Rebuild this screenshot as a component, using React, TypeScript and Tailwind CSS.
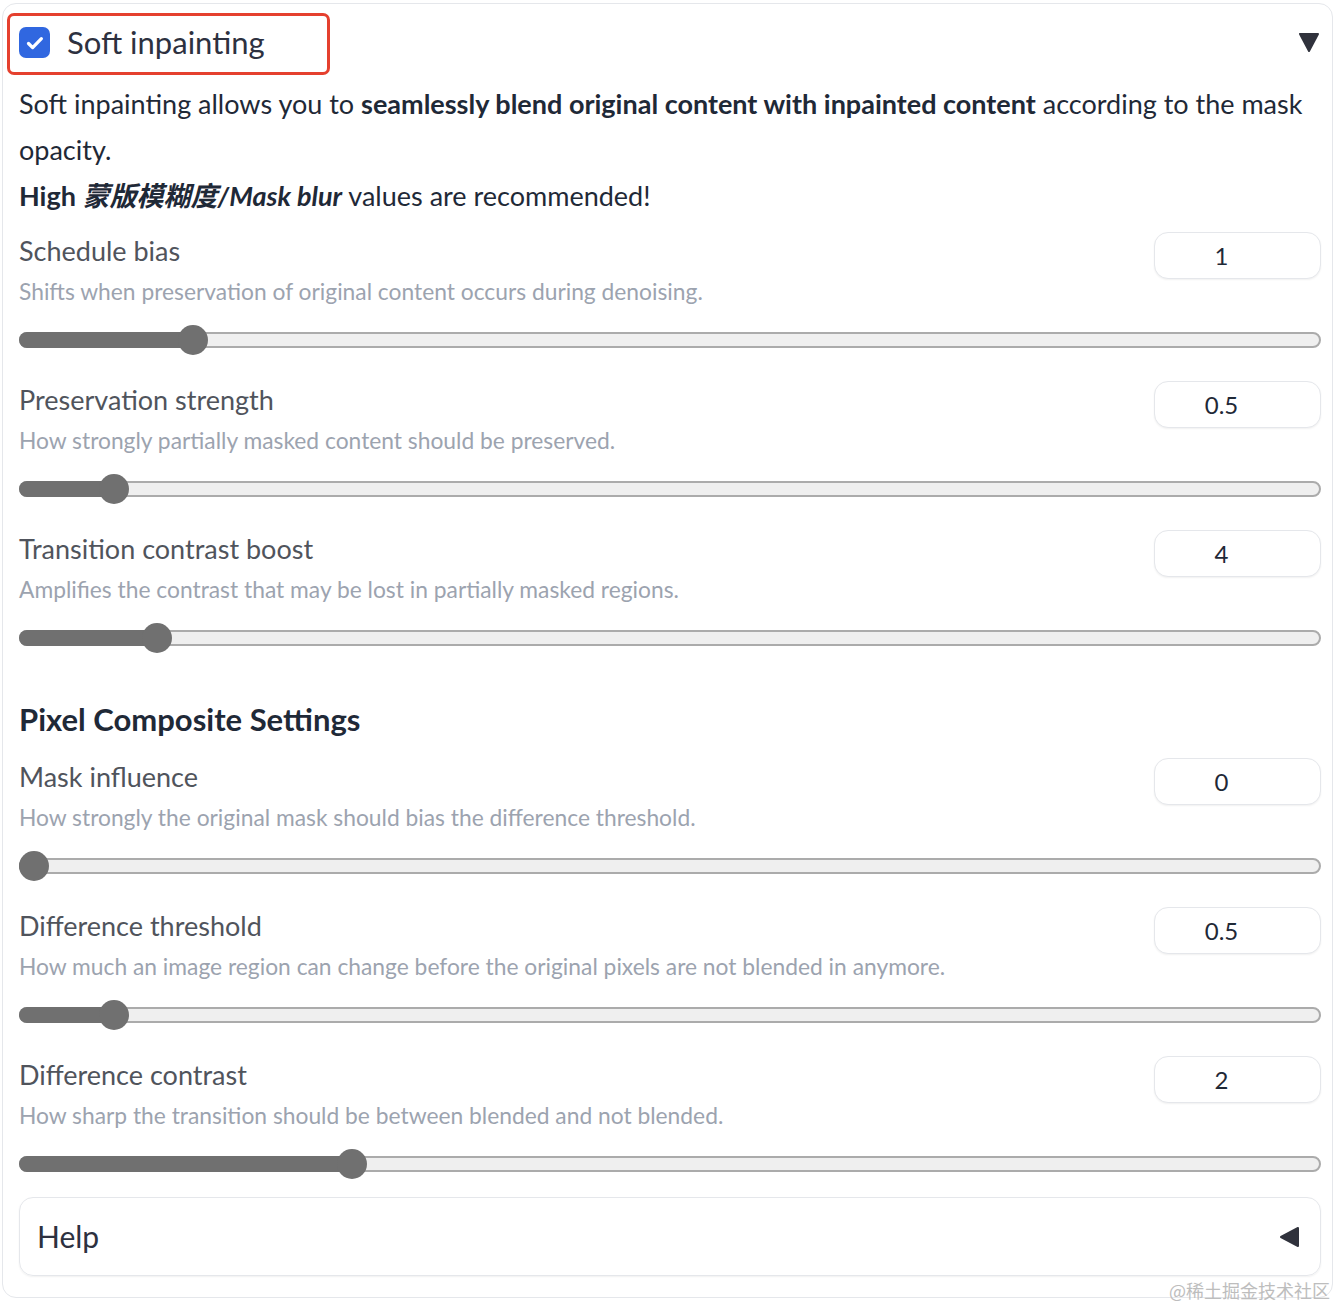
import React from "react";

type Setting = {
  label: string;
  info: string;
  value: number;
  min: number;
  max: number;
};

const softSettings: Setting[] = [
  { label: "Schedule bias", info: "Shifts when preservation of original content occurs during denoising.", value: 1, min: 0, max: 8 },
  { label: "Preservation strength", info: "How strongly partially masked content should be preserved.", value: 0.5, min: 0, max: 8 },
  { label: "Transition contrast boost", info: "Amplifies the contrast that may be lost in partially masked regions.", value: 4, min: 1, max: 32 },
];

const compositeSettings: Setting[] = [
  { label: "Mask influence", info: "How strongly the original mask should bias the difference threshold.", value: 0, min: 0, max: 1 },
  { label: "Difference threshold", info: "How much an image region can change before the original pixels are not blended in anymore.", value: 0.5, min: 0, max: 8 },
  { label: "Difference contrast", info: "How sharp the transition should be between blended and not blended.", value: 2, min: 0, max: 8 },
];

const TRACK_W = 1302;
const THUMB = 30;

function Slider({ s }: { s: Setting }) {
  const frac = (s.value - s.min) / (s.max - s.min);
  const center = THUMB / 2 + frac * (TRACK_W - THUMB);
  return (
    <div className="relative h-[30px] w-full">
      <div className="absolute left-0 right-0 top-[7px] h-[16px] rounded-full border-2 border-[#ababab] bg-[#efefef]" />
      <div
        className="absolute left-0 top-[7px] h-[16px] rounded-l-full bg-[#707070]"
        style={{ width: center }}
      />
      <div
        className="absolute top-0 h-[30px] w-[30px] rounded-full bg-[#707070]"
        style={{ left: center - THUMB / 2 }}
      />
    </div>
  );
}

function SettingRow({ s }: { s: Setting }) {
  return (
    <div className="mb-[26px]">
      <div className="flex items-start justify-between">
        <div>
          <div className="mt-[1px] text-[27px] leading-[36px] text-[#50545c]">{s.label}</div>
          <div className="mt-[8px] text-[22.8px] leading-[28px] text-[#9ca3af]">{s.info}</div>
        </div>
        <div className="flex h-[47px] w-[167px] items-center justify-center rounded-[14px] border border-[#e5e7eb] bg-white pr-[32px] text-[24px] text-[#1f2937] shadow-[0_1px_2px_rgba(0,0,0,0.06)]">
          {s.value}
        </div>
      </div>
      <div className="mt-[20px]">
        <Slider s={s} />
      </div>
    </div>
  );
}

export default function App() {
  return (
    <div className="relative min-h-[1306px] w-[1336px] bg-white pl-[2px] pt-[3px]" style={{ fontFamily: 'Lato, "Noto Sans CJK SC", sans-serif' }}>
      <div className="w-[1331px] rounded-[14px] border border-[#e5e7eb] pb-[21px] pl-[16px] pr-[11px]">
        {/* header */}
        <div className="flex h-[77px] items-center justify-between pr-[1px]">
          <div className="flex items-center">
            <div className="flex h-[31px] w-[31px] items-center justify-center rounded-[7px] bg-[#3067e0]">
              <svg width="20" height="20" viewBox="0 0 16 16" fill="none">
                <path d="M2.8 8.4l3.3 3.3 7-7.2" stroke="white" strokeWidth="2.6" strokeLinecap="round" strokeLinejoin="round" />
              </svg>
            </div>
            <span className="ml-[17px] text-[31px] text-[#2d3140]">Soft inpainting</span>
          </div>
          <svg width="22" height="22" viewBox="0 0 22 22" className="mt-[-1px]">
            <path d="M2 3h18L11 20z" fill="#30323c" stroke="#30323c" strokeWidth="2" strokeLinejoin="round" />
          </svg>
        </div>

        {/* description */}
        <div className="text-[27px] leading-[46px] text-[#1f2937]">
          <p>
            Soft inpainting allows you to <b>seamlessly blend original content with inpainted content</b> according to the mask opacity.
          </p>
          <p>
            <b>High </b>
            <b><i>蒙版模糊度/Mask blur</i></b> values are recommended!
          </p>
        </div>

        <div className="mt-[13px]">
          {softSettings.map((s) => (
            <SettingRow key={s.label} s={s} />
          ))}
        </div>

        <h2 className="mt-[46px] mb-[19px] text-[31px] font-bold leading-[40px] text-[#1f2937]">Pixel Composite Settings</h2>

        <div>
          {compositeSettings.map((s) => (
            <SettingRow key={s.label} s={s} />
          ))}
        </div>

        {/* help accordion */}
        <div className="mt-[-8px] flex h-[79px] items-center justify-between rounded-[14px] border border-[#e5e7eb] pl-[17px] pr-[19px] shadow-[0_1px_2px_rgba(0,0,0,0.06)]">
          <span className="text-[30px] text-[#2d3140]">Help</span>
          <svg width="22" height="22" viewBox="0 0 22 22">
            <path d="M19 2v18L2 11z" fill="#30323c" stroke="#30323c" strokeWidth="2" strokeLinejoin="round" />
          </svg>
        </div>
      </div>

      {/* annotation box */}
      <div className="pointer-events-none absolute left-[7px] top-[13px] h-[62px] w-[323px] rounded-[7px] border-[3px] border-[#e5402e]" />

      {/* watermark */}
      <div className="absolute right-[6px] top-[1277px] text-[18px] text-[#bdbdbd]" style={{ fontFamily: '"Noto Sans CJK SC", sans-serif' }}>
        @稀土掘金技术社区
      </div>
    </div>
  );
}
